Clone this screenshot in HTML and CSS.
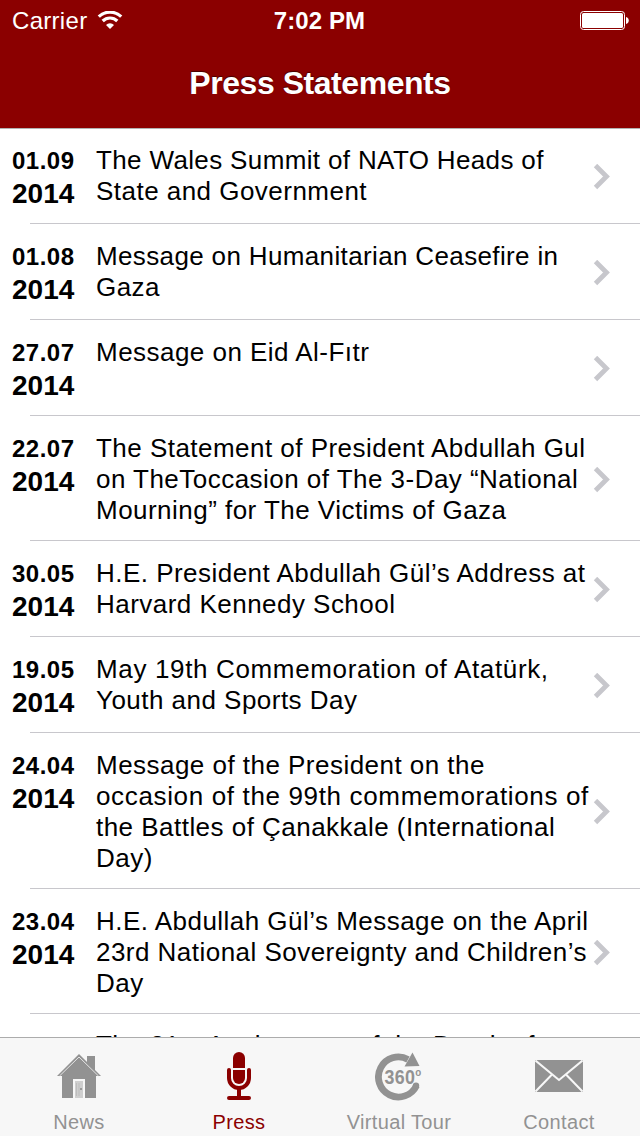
FILE: index.html
```html
<!DOCTYPE html>
<html lang="en">

<head>
    <meta charset="UTF-8">
    <meta name="viewport" content="width=device-width, initial-scale=1.0">
    <title>Press Statements</title>
    <link rel="stylesheet" href="styles.css">
</head>

<body>

    <!-- Header -->
    <header>
        <div class="status-bar">
            <div class="carrier">
                <span>Carrier</span>
                <svg width="26" height="20" viewBox="0 0 26 20">
                    <path d="M1.8 5.7 A16 16 0 0 1 24.2 5.7" fill="none" stroke="#fff" stroke-width="3.2"/>
                    <path d="M5.7 10 A10.4 10.4 0 0 1 20.3 10" fill="none" stroke="#fff" stroke-width="3.2"/>
                    <path d="M9 14 A5.7 5.7 0 0 1 17 14 L13 18 Z" fill="#fff"/>
                </svg>
            </div>
            <div class="clock">7:02 PM</div>
            <svg class="battery" width="50" height="20" viewBox="0 0 50 20">
                <rect x="0.5" y="0.5" width="44" height="18" rx="3" fill="none" stroke="#fff"/>
                <rect x="2" y="2" width="41" height="15" rx="1.5" fill="#fff"/>
                <path d="M46 6 A3.6 3.6 0 0 1 46 13 Z" fill="#fff"/>
            </svg>
        </div>
        <h1>Press Statements</h1>
    </header>

    <!-- Statement list -->
    <main class="list">
        <div class="item">
            <div class="date"><span class="day">01.09</span><span class="year">2014</span></div>
            <p class="title"><span class="tight">The Wales Summit of NATO Heads of</span><br>State and Government</p>
            <svg class="arrow" viewBox="0 0 17 26"><path d="M2.500 1.500 L13.500 12.500 L2.500 23.500"/></svg>
        </div>
        <div class="item">
            <div class="date"><span class="day">01.08</span><span class="year">2014</span></div>
            <p class="title"><span class="tight">Message on Humanitarian Ceasefire in</span><br>Gaza</p>
            <svg class="arrow" viewBox="0 0 17 26"><path d="M2.500 1.500 L13.500 12.500 L2.500 23.500"/></svg>
        </div>
        <div class="item">
            <div class="date"><span class="day">27.07</span><span class="year">2014</span></div>
            <p class="title">Message on Eid Al-Fıtr</p>
            <svg class="arrow" viewBox="0 0 17 26"><path d="M2.500 1.500 L13.500 12.500 L2.500 23.500"/></svg>
        </div>
        <div class="item">
            <div class="date"><span class="day">22.07</span><span class="year">2014</span></div>
            <p class="title">The Statement of President Abdullah Gul<br>on TheToccasion of The 3-Day “National<br>Mourning” for The Victims of Gaza</p>
            <svg class="arrow" viewBox="0 0 17 26"><path d="M2.500 1.500 L13.500 12.500 L2.500 23.500"/></svg>
        </div>
        <div class="item">
            <div class="date"><span class="day">30.05</span><span class="year">2014</span></div>
            <p class="title">H.E. President Abdullah Gül’s Address at<br>Harvard Kennedy School</p>
            <svg class="arrow" viewBox="0 0 17 26"><path d="M2.500 1.500 L13.500 12.500 L2.500 23.500"/></svg>
        </div>
        <div class="item">
            <div class="date"><span class="day">19.05</span><span class="year">2014</span></div>
            <p class="title"><span class="wide">May 19th Commemoration of Atatürk,</span><br>Youth and Sports Day</p>
            <svg class="arrow" viewBox="0 0 17 26"><path d="M2.500 1.500 L13.500 12.500 L2.500 23.500"/></svg>
        </div>
        <div class="item">
            <div class="date"><span class="day">24.04</span><span class="year">2014</span></div>
            <p class="title">Message of the President on the<br><span class="wide">occasion of the 99th commemorations of</span><br>the Battles of Çanakkale (International<br>Day)</p>
            <svg class="arrow" viewBox="0 0 17 26"><path d="M2.500 1.500 L13.500 12.500 L2.500 23.500"/></svg>
        </div>
        <div class="item">
            <div class="date"><span class="day">23.04</span><span class="year">2014</span></div>
            <p class="title">H.E. Abdullah Gül’s Message on the April<br>23rd National Sovereignty and Children’s<br>Day</p>
            <svg class="arrow" viewBox="0 0 17 26"><path d="M2.500 1.500 L13.500 12.500 L2.500 23.500"/></svg>
        </div>
        <div class="item">
            <div class="date"></div>
            <p class="title">The 21st Anniversary of the Death of</p>
        </div>
    </main>

    <!-- Tab bar -->
    <nav>
        <a href="#">
            <svg width="48" height="50" viewBox="0 0 48 50">
                <path d="M32 5 H40 V20 L32 12 Z" fill="#929292"/>
                <path d="M24 3 L46 25 H41 V47 H30 V28 H18 V47 H7 V25 H2 Z" fill="#929292"/>
                <path d="M4.5 25 L24 6 L43.5 25" fill="none" stroke="#e4e4e4" stroke-width="1"/>
                <rect x="20" y="30" width="8" height="17" fill="#cfcfcf"/>
                <path d="M21.5 32 V45 M24 32 V45" stroke="#bdbdbd" stroke-width="1"/>
                <circle cx="26" cy="38" r="1" fill="#888"/>
            </svg>
            <span>News</span>
        </a>
        <a href="#" class="active">
            <svg width="48" height="50" viewBox="0 0 48 50">
                <path d="M18 17 V7 A6 6 0 0 1 30 7 V17 Z" fill="#8b0000"/>
                <path d="M18 19 H30 V27 A6 6 0 0 1 18 27 Z" fill="#8b0000"/>
                <path d="M14 19 V27 A10 10 0 0 0 34 27 V19" fill="none" stroke="#8b0000" stroke-width="4" stroke-linecap="round"/>
                <path d="M24 37 V46 M14 47 H34" fill="none" stroke="#8b0000" stroke-width="4" stroke-linecap="round"/>
            </svg>
            <span>Press</span>
        </a>
        <a href="#">
            <svg width="48" height="50" viewBox="0 0 48 50">
                <path d="M33 8.4 A20 20 0 1 0 41.5 34.6" fill="none" stroke="#929292" stroke-width="6.8"/>
                <circle cx="41" cy="34.6" r="3.2" fill="#929292"/>
                <path d="M37.5 1.5 L44.5 15 L29.5 15.5 Z" fill="#929292"/>
                <text x="9.5" y="33" class="deg" textLength="37" lengthAdjust="spacingAndGlyphs">360<tspan class="deg-mark" dy="-8">o</tspan></text>
            </svg>
            <span>Virtual Tour</span>
        </a>
        <a href="#">
            <svg width="48" height="50" viewBox="0 0 48 50">
                <rect x="0" y="9" width="48" height="32" rx="1" fill="#929292"/>
                <path d="M0.5 9.5 L24 29 L47.5 9.5 M0.5 40.5 L17 23.5 M47.5 40.5 L31 23.5" fill="none" stroke="#f7f7f7" stroke-width="2"/>
            </svg>
            <span>Contact</span>
        </a>
    </nav>

</body>

</html>
```
FILE: styles.css
```css
* {
    box-sizing: border-box;
}

body {
    font-family: "Liberation Sans", Arial, sans-serif;
    background-color: #fff;
    color: #000;
    margin: 0;
    width: 640px;
    height: 1136px;
    display: flex;
    flex-direction: column;
    overflow: hidden;
}

/* Header */
header {
    height: 129px;
    flex: none;
    background-color: #8b0000;
    border-bottom: 1px solid #b2b2b2;
    color: #fff;
}

.status-bar {
    height: 41px;
    padding: 0 10px 0 12px;
    display: grid;
    grid-template-columns: 1fr auto 1fr;
    align-items: center;
}

.carrier {
    display: flex;
    align-items: center;
    gap: 10px;
    font-size: 24px;
    letter-spacing: 0.3px;
}

.clock {
    font-size: 24px;
    font-weight: bold;
    letter-spacing: 0.1px;
    padding-right: 3px;
}

.battery {
    justify-self: end;
}

h1 {
    margin: 0;
    height: 85px;
    line-height: 85px;
    font-size: 32px;
    letter-spacing: -0.45px;
    text-align: center;
    text-shadow: 0 -1px 1px rgba(0, 0, 0, 0.5);
}

/* Statement list */
.list {
    flex: 1;
    min-height: 0;
    overflow: hidden;
    margin-top: -1px;
    border-top: 1px solid #b2b2b2;
}

.item {
    display: flex;
    min-height: 96px;
    padding: 17px 30px 15px 12px;
    background: linear-gradient(#c8c7cc, #c8c7cc) 30px 100% / 100% 1px no-repeat;
}

.item:first-child {
    margin-top: -1px;
}

.item:last-child {
    padding-top: 16px;
}

.date {
    width: 84px;
    height: 62px;
    flex: none;
    display: flex;
    flex-direction: column;
    margin-top: -1px;
    font-weight: bold;
}

.day {
    font-size: 24px;
    line-height: 33px;
    letter-spacing: 0.5px;
}

.year {
    font-size: 28px;
    line-height: 33px;
}

.title {
    flex: 1;
    margin: 0;
    font-size: 26px;
    line-height: 31px;
    letter-spacing: 0.47px;
    white-space: nowrap;
}

.tight {
    letter-spacing: 0.36px;
}

.wide {
    letter-spacing: 0.65px;
}

.arrow {
    width: 17px;
    height: 26px;
    flex: none;
    align-self: center;
}

.arrow path {
    fill: none;
    stroke: #c7c7cc;
    stroke-width: 4.8;
}

/* Tab bar */
nav {
    height: 99px;
    flex: none;
    display: flex;
    background-color: #f7f7f7;
    border-top: 1px solid #acacac;
}

nav a {
    flex: 1;
    display: flex;
    flex-direction: column;
    align-items: center;
    padding: 13px 2px 0 0;
    gap: 10px;
    color: #929292;
    font-size: 20px;
    line-height: 23px;
    letter-spacing: 0.35px;
    text-decoration: none;
}

nav a.active {
    color: #8b0000;
}

.deg {
    font-size: 20px;
    font-weight: bold;
    fill: #929292;
}

.deg-mark {
    font-size: 11px;
}
```
